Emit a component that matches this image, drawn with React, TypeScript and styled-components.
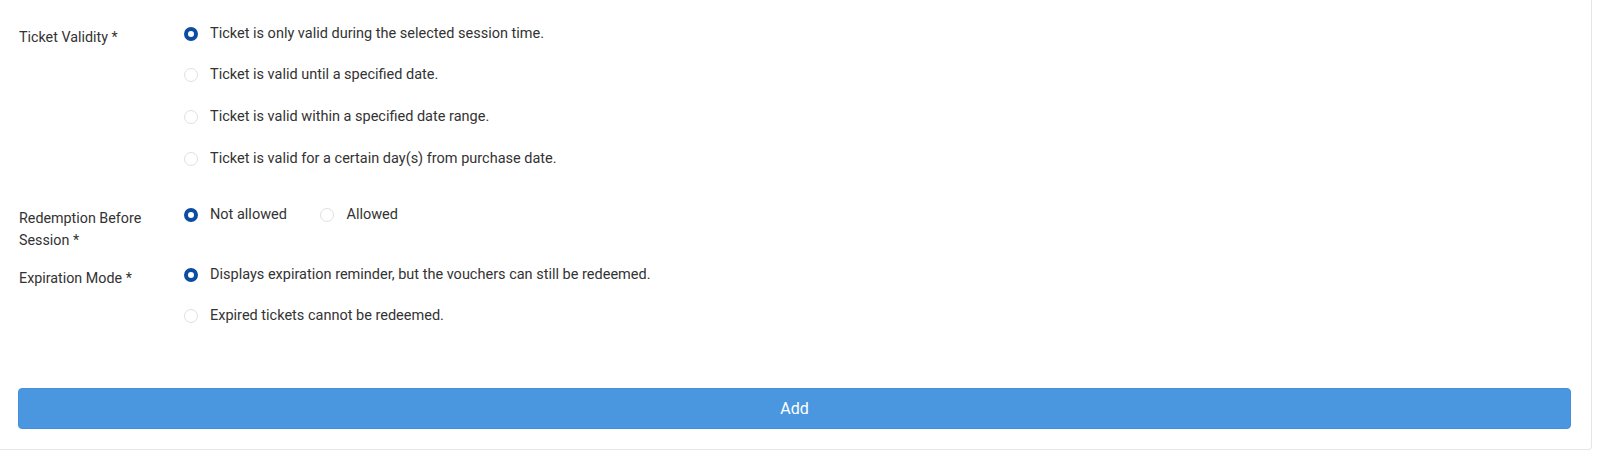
import React, { useState } from "react";
import styled, { createGlobalStyle } from "styled-components";

const GlobalStyle = createGlobalStyle`
  html, body {
    margin: 0;
    padding: 0;
    background: #ffffff;
  }
  body {
    font-family: Roboto, "Liberation Sans", Arial, sans-serif;
    -webkit-font-smoothing: antialiased;
  }
  * { box-sizing: border-box; }
`;

const Card = styled.div`
  width: 1592px;
  background: #ffffff;
  border-right: 1px solid #e6e6e6;
  border-bottom: 1px solid #e6e6e6;
  border-bottom-right-radius: 4px;
  padding: 23.5px 20px 20px 18px;
  display: flex;
  flex-direction: column;
`;

const Row = styled.div<{ $mb: number }>`
  display: flex;
  align-items: flex-start;
  margin-bottom: ${(p) => p.$mb}px;
`;

const Label = styled.div`
  width: 166px;
  flex: none;
  padding: 2px 24px 0 1px;
  font-size: 14.3px;
  line-height: 22px;
  color: #333333;
`;

const Options = styled.div<{ $inline?: boolean }>`
  display: flex;
  flex-direction: ${(p) => (p.$inline ? "row" : "column")};
  gap: ${(p) => (p.$inline ? "33.5px" : "21.7px")};
`;

const Option = styled.label`
  display: flex;
  align-items: center;
  height: 20px;
  gap: 12px;
  font-size: 14.5px;
  line-height: 20px;
  color: #333333;
  cursor: pointer;
  white-space: nowrap;
`;

const Radio = styled.span<{ $checked: boolean }>`
  width: 14px;
  height: 14px;
  flex: none;
  border-radius: 50%;
  background: #ffffff;
  border: ${(p) => (p.$checked ? "4.5px solid #0c4da2" : "1px solid #e0e0e0")};
`;

const AddButton = styled.button`
  width: 100%;
  height: 41px;
  border: 1px solid #4490dc;
  border-radius: 4px;
  background: #4a97e0;
  color: #ffffff;
  font-family: Roboto, "Liberation Sans", Arial, sans-serif;
  font-size: 16px;
  cursor: pointer;
`;

type Group = {
  label: string;
  options: string[];
  inline?: boolean;
  mb: number;
};

const groups: Group[] = [
  {
    label: "Ticket Validity *",
    options: [
      "Ticket is only valid during the selected session time.",
      "Ticket is valid until a specified date.",
      "Ticket is valid within a specified date range.",
      "Ticket is valid for a certain day(s) from purchase date.",
    ],
    mb: 36.9,
  },
  {
    label: "Redemption Before Session *",
    options: ["Not allowed", "Allowed"],
    inline: true,
    mb: 13.2,
  },
  {
    label: "Expiration Mode *",
    options: [
      "Displays expiration reminder, but the vouchers can still be redeemed.",
      "Expired tickets cannot be redeemed.",
    ],
    mb: 62.1,
  },
];

export default function App() {
  const [selected, setSelected] = useState<number[]>([0, 0, 0]);
  return (
    <>
      <GlobalStyle />
      <Card>
        {groups.map((g, gi) => (
          <Row key={g.label} $mb={g.mb}>
            <Label>{g.label}</Label>
            <Options $inline={g.inline}>
              {g.options.map((o, oi) => (
                <Option
                  key={o}
                  onClick={() =>
                    setSelected((s) => s.map((v, i) => (i === gi ? oi : v)))
                  }
                >
                  <Radio $checked={selected[gi] === oi} />
                  {o}
                </Option>
              ))}
            </Options>
          </Row>
        ))}
        <AddButton>Add</AddButton>
      </Card>
    </>
  );
}
